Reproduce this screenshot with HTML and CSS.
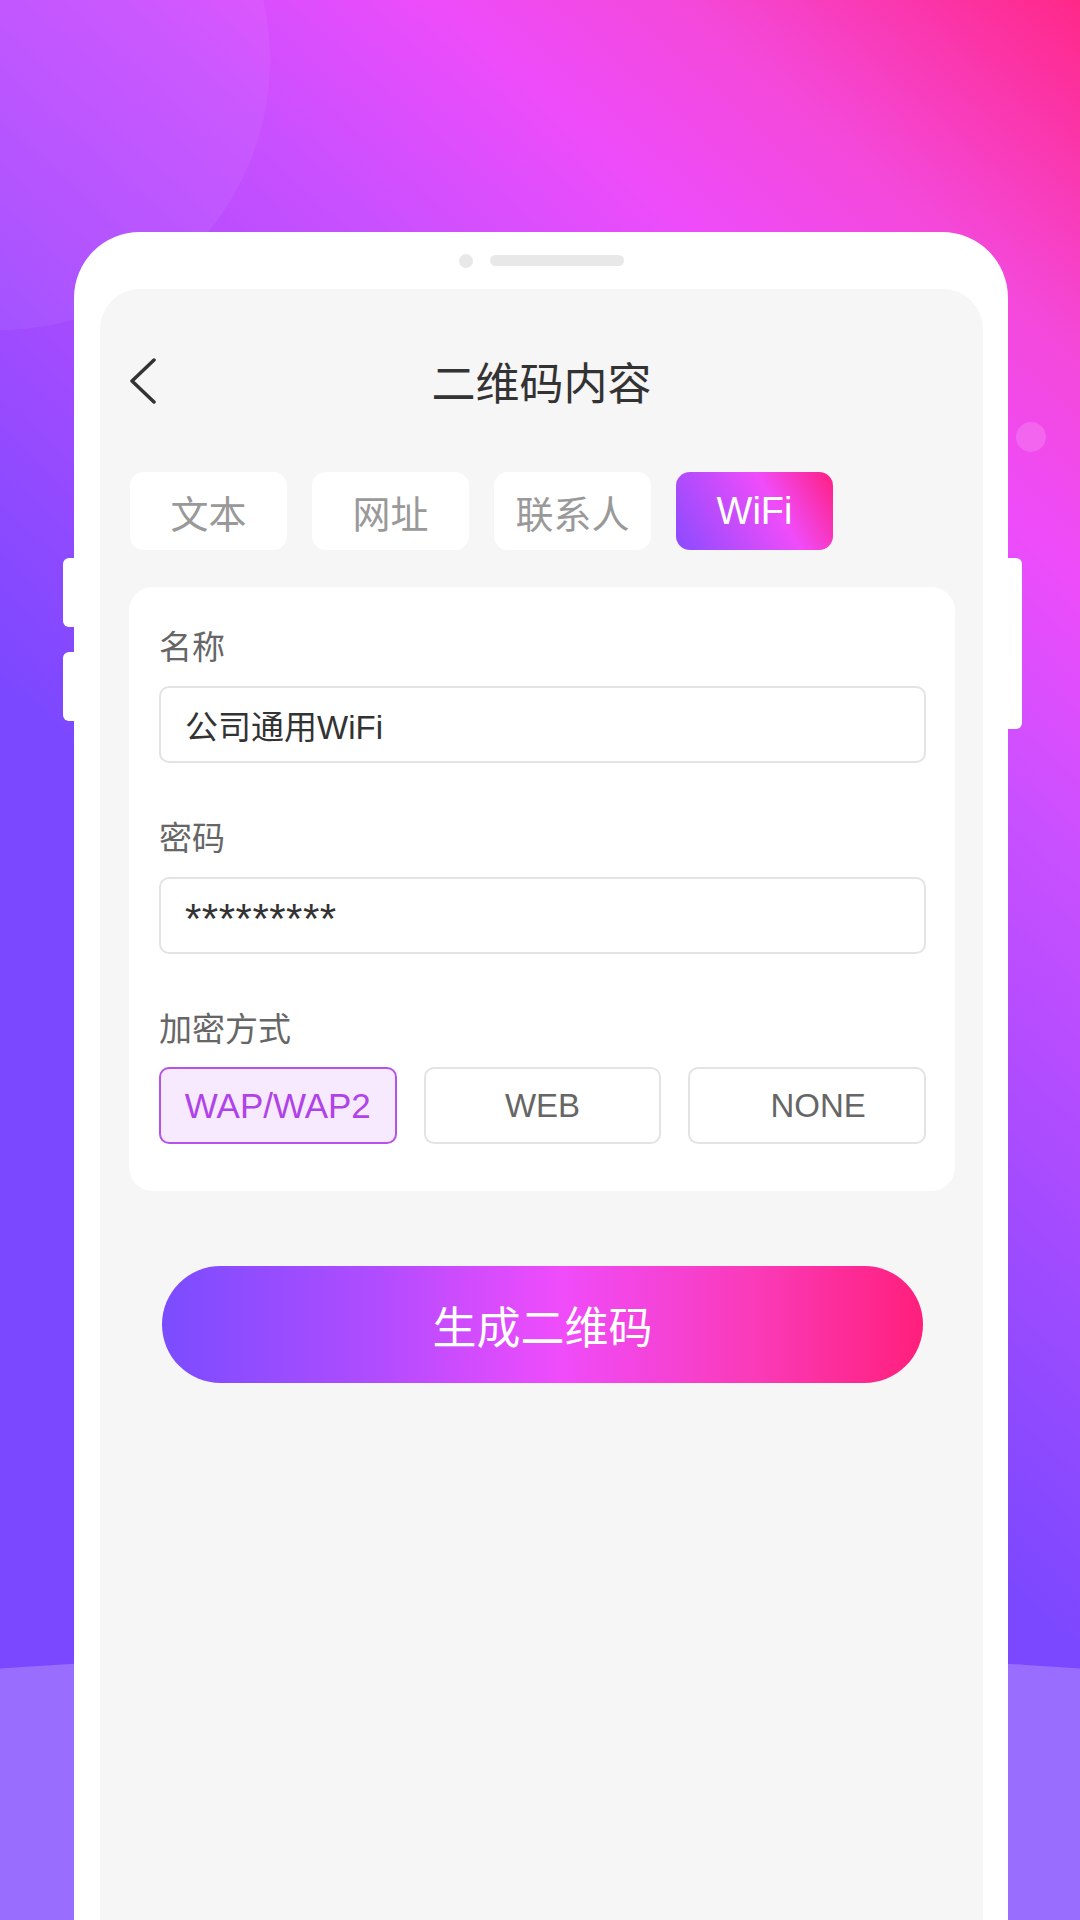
FILE: index.html
```html
<!DOCTYPE html>
<html lang="zh-CN">
<head>
    <meta charset="UTF-8">
    <title>二维码内容</title>
    <meta name="viewport" content="width=device-width, initial-scale=1.0">
    <link rel="stylesheet" href="styles.css">
</head>
<body>

<div class="stage">
    <div class="glow glow-big"></div>
    <div class="glow glow-dot"></div>
    <div class="wave"></div>

    <div class="phone">
        <span class="side-key key-l1"></span>
        <span class="side-key key-l2"></span>
        <span class="side-key key-r"></span>

        <div class="speaker">
            <span class="speaker-dot"></span>
            <span class="speaker-bar"></span>
        </div>

        <div class="screen">
            <header class="topbar">
                <svg class="back" width="26" height="46" viewBox="0 0 26 46">
                    <polyline points="24,2 2,23 24,44" fill="none" stroke="#333" stroke-width="3.5" stroke-linecap="round" stroke-linejoin="round"/>
                </svg>
                <h1>二维码内容</h1>
                <span></span>
            </header>

            <div class="tabs">
                <div class="tab">文本</div>
                <div class="tab">网址</div>
                <div class="tab">联系人</div>
                <div class="tab active">WiFi</div>
            </div>

            <div class="card">
                <div class="field-label">名称</div>
                <div class="field">公司通用WiFi</div>

                <div class="field-label gap">密码</div>
                <div class="field secret">*********</div>

                <div class="field-label gap">加密方式</div>
                <div class="options">
                    <div class="option selected">WAP/WAP2</div>
                    <div class="option">WEB</div>
                    <div class="option shifted">NONE</div>
                </div>
            </div>

            <div class="make-btn">生成二维码</div>
        </div>
    </div>
</div>

</body>
</html>
```

FILE: styles.css
```css
* { box-sizing: border-box; }
:root {
    --text-dark: #333;
    --text-mid: #666;
    --text-light: #999;
    --line: #e3e3e3;
    --accent: #b043e8;
}
html, body {
    margin: 0px;
    height: 100%;
}
body {
    font-family: "Liberation Sans", "Noto Sans CJK SC", sans-serif;
    overflow: hidden;
}

.stage {
    position: relative;
    width: 1080px;
    height: 1920px;
    overflow: hidden;
    padding-top: 232px;
    background: linear-gradient(42deg, #7c48ff 0%, #7c48ff 43%, #8f4aff 50%, #b34cff 62%, #c850ff 70%, #ee4cfa 80%, #f448d8 88%, #ff2888 100%);
}

/* background decoration */
.glow {
    position: absolute;
    border-radius: 50%;
    background: rgba(255, 255, 255, 0.05);
}
.glow-big {
    left: -270px;
    top: -210px;
    width: 540px;
    height: 540px;
}
.glow-dot {
    left: 1016px;
    top: 422px;
    width: 30px;
    height: 30px;
    background: rgba(255, 255, 255, 0.15);
}
.wave {
    position: absolute;
    left: -1460px;
    top: 1650px;
    width: 4000px;
    height: 1000px;
    border-radius: 50%;
    background: #996eff;
}

/* phone frame */
.phone {
    position: relative;
    margin-left: 74px;
    width: 934px;
    height: 1688px;
    background: #fff;
    border-radius: 66px 66px 0 0;
    display: flex;
    flex-direction: column;
}
.side-key {
    position: absolute;
    background: #fff;
    width: 14px;
}
.key-l1 { left: -11px; top: 326px; height: 69px; border-radius: 6px 0 0 6px; }
.key-l2 { left: -11px; top: 420px; height: 69px; border-radius: 6px 0 0 6px; }
.key-r { right: -14px; top: 326px; height: 171px; border-radius: 0 6px 6px 0; }

.speaker {
    height: 57px;
    display: flex;
    justify-content: center;
    align-items: center;
    gap: 17px;
}
.speaker-dot {
    width: 14px;
    height: 14px;
    border-radius: 50%;
    background: #e8e8e8;
}
.speaker-bar {
    width: 134px;
    height: 11px;
    border-radius: 6px;
    background: #e8e8e8;
}

.screen {
    flex: 1;
    margin: 0 25px 0 26px;
    background: #f6f6f6;
    border-radius: 40px 40px 0 0;
}

/* title bar */
.topbar {
    margin-top: 45px;
    height: 94px;
    display: grid;
    grid-template-columns: 1fr auto 1fr;
    align-items: center;
}
.back { margin-left: 30px; }
.topbar h1 {
    margin: 0px;
    font-size: 44px;
    font-weight: normal;
    color: var(--text-dark);
}

/* type tabs */
.tabs {
    margin-top: 44px;
    padding: 0 30px;
    display: flex;
    gap: 25px;
}
.tab {
    width: 157px;
    height: 78px;
    border-radius: 14px;
    background: #fff;
    color: var(--text-light);
    font-size: 38px;
    display: flex;
    align-items: center;
    justify-content: center;
}
.tab.active {
    color: #fff;
    background: linear-gradient(60deg, #8a4bff 0%, #c34cfc 35%, #f04cfa 62%, #ff1f82 100%);
}

/* form card */
.card {
    margin: 37px 28px 0 29px;
    padding: 38px 29px 47px 30px;
    background: #fff;
    border-radius: 24px;
}
.field-label {
    font-size: 33px;
    line-height: 46px;
    color: var(--text-mid);
}
.field-label.gap { margin-top: 53px; }
.field {
    margin-top: 15px;
    height: 77px;
    border: 2px solid var(--line);
    border-radius: 10px;
    padding-left: 24px;
    display: flex;
    align-items: center;
    font-size: 33px;
    color: var(--text-dark);
}
.field.secret {
    font-size: 42px;
    letter-spacing: 0.5px;
    padding-top: 6px;
}

.options {
    margin-top: 14px;
    display: grid;
    grid-template-columns: repeat(3, 1fr);
    gap: 27px;
}
.option {
    height: 77px;
    border: 2px solid var(--line);
    border-radius: 10px;
    display: flex;
    align-items: center;
    justify-content: center;
    font-size: 33px;
    color: var(--text-mid);
}
.option.selected {
    background: #f7e9fe;
    border-color: #b552e8;
    color: var(--accent);
    font-size: 35px;
}
.option.shifted { padding-left: 22px; }

/* submit */
.make-btn {
    margin: 75px 0 0 62px;
    width: 761px;
    height: 117px;
    border-radius: 59px;
    background: linear-gradient(90deg, #7b4cff 0%, #b04cff 28%, #ef4cfb 52%, #fa3ab8 78%, #ff1f7c 100%);
    color: #fff;
    font-size: 44px;
    display: flex;
    align-items: center;
    justify-content: center;
}
```
